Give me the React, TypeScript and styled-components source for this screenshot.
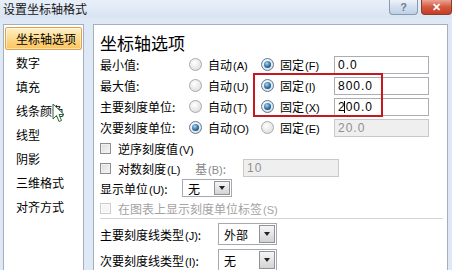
import { Fragment } from "react";
import styled, { createGlobalStyle } from "styled-components";

const GlobalStyle = createGlobalStyle`
  html, body {
    margin: 0;
    padding: 0;
  }
  body {
    width: 452px;
    height: 270px;
    overflow: hidden;
    background: #dfe9f5;
    font-family: "Noto Sans CJK SC", "Liberation Sans", sans-serif;
    font-size: 12px;
    color: #000;
  }
`;

const Window = styled.div`
  width: 452px;
  height: 270px;
  display: flex;
  flex-direction: column;
  overflow: hidden;
  background: #dfe9f5;
`;

const TitleBar = styled.div`
  height: 18px;
  flex-shrink: 0;
  display: flex;
  justify-content: space-between;
  align-items: flex-start;
  background: linear-gradient(#e8eff9, #d9e4f2);
`;

const Title = styled.div`
  padding-left: 3px;
  line-height: 17px;
  font-size: 12px;
  color: #151515;
`;

const Controls = styled.div`
  display: flex;
  gap: 3px;
`;

const CaptionButton = styled.div<{ $close?: boolean }>`
  width: ${(p) => (p.$close ? 31 : 29)}px;
  height: 15px;
  box-sizing: border-box;
  border: 1px solid ${(p) => (p.$close ? "#8c3a2c" : "#8899b0")};
  border-top: none;
  border-radius: 0 0 4px 4px;
  background: ${(p) =>
    p.$close
      ? "linear-gradient(#eaa594, #d4583f 50%, #c43c26)"
      : "linear-gradient(#eef3fa, #d3dfee 50%, #bfd0e6)"};
  display: flex;
  align-items: center;
  justify-content: center;
  font-family: "Liberation Sans", sans-serif;
  font-weight: bold;
  font-size: 11px;
  color: ${(p) => (p.$close ? "#fff" : "#6c7f99")};
`;

const Content = styled.div`
  flex: 1;
  min-height: 0;
  display: flex;
  gap: 9px;
  padding: 6px 4px 0 3px;
`;

const Nav = styled.div`
  position: relative;
  width: 81px;
  flex-shrink: 0;
  box-sizing: border-box;
  border: 1px solid #a4afbd;
  border-bottom: none;
  background: #fff;
  padding: 2px 1px;
`;

const NavItem = styled.div<{ $active?: boolean }>`
  height: 23px;
  margin-bottom: 1px;
  box-sizing: border-box;
  padding-left: 10px;
  display: flex;
  align-items: center;
  font-size: 12px;
  border: 1px solid ${(p) => (p.$active ? "#e2a24a" : "transparent")};
  border-radius: 2px;
  background: ${(p) =>
    p.$active ? "linear-gradient(#fff1c8, #fdd787 55%, #fbc45f)" : "transparent"};
  box-shadow: ${(p) => (p.$active ? "inset 0 0 0 1px rgba(255,255,255,0.5)" : "none")};
`;

const Cursor = styled.svg`
  position: absolute;
  left: 48px;
  top: 78px;
`;

const Panel = styled.div`
  position: relative;
  flex: 1;
  box-sizing: border-box;
  border: 1px solid #a4afbd;
  border-bottom: none;
  background: #fff;
  padding: 7px 0 0 6px;
`;

const Heading = styled.div`
  height: 22px;
  line-height: 22px;
  font-size: 17px;
`;

const FieldGrid = styled.div`
  display: grid;
  grid-template-columns: 89px 72px 73px 95px;
  grid-auto-rows: 21px;
  align-items: center;
`;

const Label = styled.span<{ $w?: number; $muted?: boolean }>`
  display: inline-block;
  width: ${(p) => (p.$w ? `${p.$w}px` : "auto")};
  white-space: nowrap;
  color: ${(p) => (p.$muted ? "#8a8a8a" : "inherit")};
`;

const Key = styled.span`
  font-family: "Liberation Sans", sans-serif;
  font-size: 11px;
  margin-left: 1px;
`;

const Option = styled.label`
  display: flex;
  align-items: center;
  gap: 6px;
  white-space: nowrap;
`;

const Radio = styled.span<{ $checked?: boolean }>`
  position: relative;
  width: 13px;
  height: 13px;
  box-sizing: border-box;
  border-radius: 50%;
  border: 1px solid ${(p) => (p.$checked ? "#5b7896" : "#a9a9a9")};
  background: radial-gradient(circle at 40% 35%, #ffffff, #d6d6d6);
  flex-shrink: 0;

  &::after {
    content: "";
    display: ${(p) => (p.$checked ? "block" : "none")};
    position: absolute;
    left: 2px;
    top: 2px;
    width: 7px;
    height: 7px;
    border-radius: 50%;
    background: radial-gradient(circle at 40% 35%, #a8d6f7, #2a6ea3 55%, #0f3b60);
  }
`;

const Input = styled.div<{ $disabled?: boolean; $w?: number }>`
  position: relative;
  width: ${(p) => p.$w ?? 95}px;
  height: 18px;
  box-sizing: border-box;
  border: 1px solid ${(p) => (p.$disabled ? "#c9c9c9" : "#abadb3")};
  background: ${(p) => (p.$disabled ? "#efefef" : "#fff")};
  color: ${(p) => (p.$disabled ? "#8f8f8f" : "#000")};
  font-family: "Liberation Sans", sans-serif;
  font-size: 12px;
  letter-spacing: 1px;
  line-height: 16px;
  padding-left: 3px;
`;

const TextCaret = styled.span`
  position: absolute;
  left: 9px;
  top: 2px;
  width: 1px;
  height: 12px;
  background: #000;
`;

const Highlight = styled.div`
  position: absolute;
  left: 159px;
  top: 48px;
  width: 130px;
  height: 44px;
  box-sizing: border-box;
  border: 2px solid #c8181f;
  pointer-events: none;
`;

const CheckRow = styled.div<{ $disabled?: boolean }>`
  height: 20px;
  display: flex;
  align-items: center;
  color: ${(p) => (p.$disabled ? "#a3a3a3" : "#000")};
`;

const Checkbox = styled.span<{ $disabled?: boolean }>`
  width: 11px;
  height: 11px;
  box-sizing: border-box;
  margin-right: 7px;
  border: 1px solid ${(p) => (p.$disabled ? "#cdcdcd" : "#8e8f8f")};
  background: ${(p) =>
    p.$disabled ? "#f6f6f6" : "linear-gradient(135deg, #dcdcdc, #f7f7f7)"};
  box-shadow: inset 0 0 0 1px ${(p) => (p.$disabled ? "#fbfbfb" : "#f0f0f0")};
  flex-shrink: 0;
`;

const Select = styled.div<{ $w: number; $h: number }>`
  width: ${(p) => p.$w}px;
  height: ${(p) => p.$h}px;
  box-sizing: border-box;
  border: 1px solid #a5a8ae;
  background: #fff;
  display: flex;
  align-items: center;
  justify-content: space-between;
  padding: 0 1px 0 5px;
  font-size: 12px;
`;

const DropButton = styled.span<{ $h: number }>`
  width: 16px;
  height: ${(p) => p.$h}px;
  box-sizing: border-box;
  border: 1px solid #8f9296;
  background: linear-gradient(#f6f6f6, #d3d3d3);
  display: flex;
  align-items: center;
  justify-content: center;

  &::after {
    content: "";
    border-left: 3px solid transparent;
    border-right: 3px solid transparent;
    border-top: 4px solid #222;
  }
`;

const Separator = styled.div`
  height: 1px;
  margin: 0 4px 4px 0;
  background: #d4d4d4;
`;

const TickRow = styled.div`
  height: 22px;
  margin-bottom: 4px;
  display: flex;
  align-items: center;
`;

const navItems = ["坐标轴选项", "数字", "填充", "线条颜色", "线型", "阴影", "三维格式", "对齐方式"];

const axisRows = [
  { label: "最小值:", auto: "A", fix: "F", value: "0.0", fixed: true },
  { label: "最大值:", auto: "U", fix: "I", value: "800.0", fixed: true },
  { label: "主要刻度单位:", auto: "T", fix: "X", value: "200.0", fixed: true, caret: true },
  { label: "次要刻度单位:", auto: "O", fix: "E", value: "20.0", fixed: false },
];

export default function App() {
  return (
    <>
      <GlobalStyle />
      <Window>
        <TitleBar>
          <Title>设置坐标轴格式</Title>
          <Controls>
            <CaptionButton>?</CaptionButton>
            <CaptionButton $close>✕</CaptionButton>
          </Controls>
        </TitleBar>
        <Content>
          <Nav>
            {navItems.map((item, i) => (
              <NavItem key={item} $active={i === 0}>
                {item}
              </NavItem>
            ))}
            <Cursor width="13" height="20" viewBox="0 0 13 20">
              <path
                d="M1 1 L1 16 L4.5 12.5 L7 18.5 L9.5 17.5 L7 11.5 L12 11.5 Z"
                fill="#fff"
                stroke="#2f6b35"
                strokeWidth="1"
                strokeLinejoin="round"
              />
            </Cursor>
          </Nav>
          <Panel>
            <Heading>坐标轴选项</Heading>
            <FieldGrid>
              {axisRows.map((row) => (
                <Fragment key={row.label}>
                  <Label>{row.label}</Label>
                  <Option>
                    <Radio $checked={!row.fixed} />
                    <span>
                      自动<Key>({row.auto})</Key>
                    </span>
                  </Option>
                  <Option>
                    <Radio $checked={row.fixed} />
                    <span>
                      固定<Key>({row.fix})</Key>
                    </span>
                  </Option>
                  <Input $disabled={!row.fixed}>
                    {row.value}
                    {row.caret && <TextCaret />}
                  </Input>
                </Fragment>
              ))}
            </FieldGrid>
            <CheckRow>
              <Checkbox />
              <Label>
                逆序刻度值<Key>(V)</Key>
              </Label>
            </CheckRow>
            <CheckRow>
              <Checkbox />
              <Label $w={77}>
                对数刻度<Key>(L)</Key>
              </Label>
              <Label $w={48} $muted>
                基<Key>(B)</Key>:
              </Label>
              <Input $disabled $w={96}>
                10
              </Input>
            </CheckRow>
            <CheckRow>
              <Label $w={82}>
                显示单位<Key>(U)</Key>:
              </Label>
              <Select $w={50} $h={18}>
                无
                <DropButton $h={14} />
              </Select>
            </CheckRow>
            <CheckRow $disabled>
              <Checkbox $disabled />
              <Label>
                在图表上显示刻度单位标签<Key>(S)</Key>
              </Label>
            </CheckRow>
            <Separator />
            <TickRow>
              <Label $w={118}>
                主要刻度线类型<Key>(J)</Key>:
              </Label>
              <Select $w={59} $h={22}>
                外部
                <DropButton $h={18} />
              </Select>
            </TickRow>
            <TickRow>
              <Label $w={118}>
                次要刻度线类型<Key>(I)</Key>:
              </Label>
              <Select $w={59} $h={22}>
                无
                <DropButton $h={18} />
              </Select>
            </TickRow>
            <Highlight />
          </Panel>
        </Content>
      </Window>
    </>
  );
}
